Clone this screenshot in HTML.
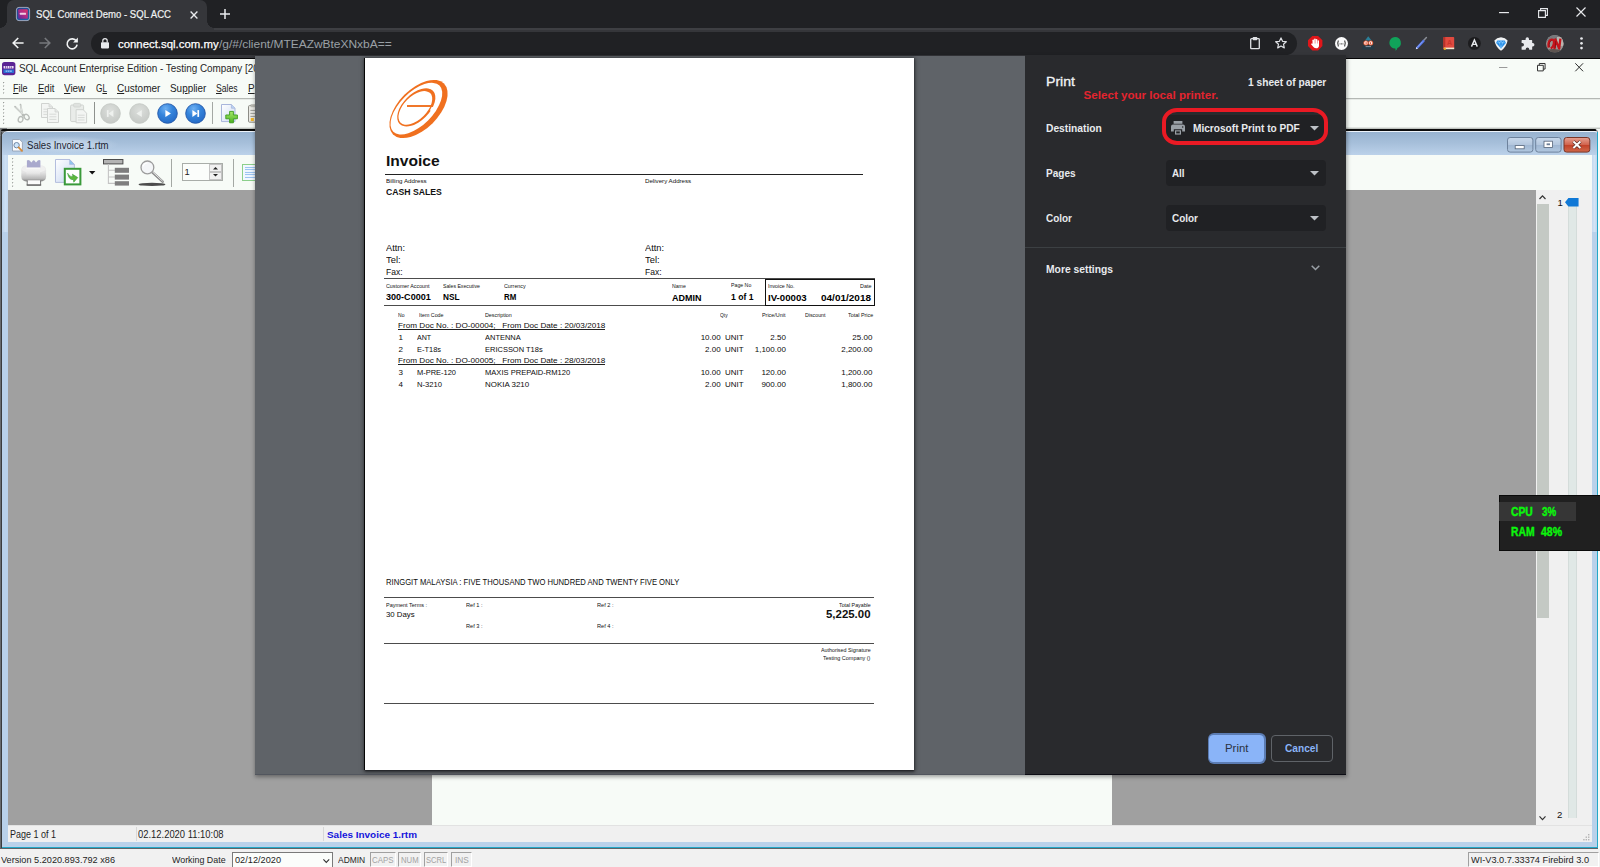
<!DOCTYPE html>
<html>
<head>
<meta charset="utf-8">
<title>SQL Connect Demo - SQL ACC</title>
<style>
*{box-sizing:border-box;margin:0;padding:0}
html,body{width:1600px;height:867px;overflow:hidden;background:#f7fbf7;font-family:"Liberation Sans",sans-serif;}
.abs{position:absolute}
.t{position:absolute;white-space:nowrap;line-height:1;transform-origin:0 0}
svg{overflow:visible}
/* ---------- Chrome ---------- */
#tabstrip{left:0;top:0;width:1600px;height:28px;background:#202124}
#tab{left:7px;top:0;width:200px;height:28px;background:#35363a;border-radius:7px 7px 0 0}
#tab:before,#tab:after{content:'';position:absolute;bottom:0;width:7px;height:7px;background:radial-gradient(circle at 0 0,transparent 6.6px,#35363a 7px)}
#tab:before{left:-7px}
#tab:after{right:-7px;background:radial-gradient(circle at 100% 0,transparent 6.6px,#35363a 7px)}
#toolbar{left:0;top:28px;width:1600px;height:30px;background:#35363a}
#tbline{left:0;top:57.8px;width:1600px;height:1.1px;background:#060607}
#omni{left:91px;top:32px;width:1206px;height:23px;border-radius:12px;background:#202124}
/* ---------- App ---------- */
#app{left:0;top:0;width:1600px;height:867px;background:#f7fbf7}
/* ---------- print dialog ---------- */
#dlg{left:255px;top:56px;width:1091px;height:719px;background:#5f6368;box-shadow:0 1px 4px 0.5px rgba(0,0,0,.36);border-bottom:1px solid #52565e}
#side{left:770px;top:-1px;width:321px;height:720px;background:#292a2d;border-bottom:1px solid #0d0d15}
#paper{left:110px;top:2px;width:549px;height:712.2px;background:#fff;box-shadow:-1px 0 0 #050505,0 1px 1.5px rgba(20,22,25,.7),0 1px 4px 1px rgba(0,0,0,.5)}
</style>
</head>
<body>
<!-- ================= APP (below chrome) ================= -->
<div id="app" class="abs">
<svg class="abs" style="left:1.8px;top:61.8px;" width="13.4" height="13.2" viewBox="0 0 13.4 13.2"><rect width="13.4" height="13.2" rx="2.6" fill="#5a2494"/>
<path d="M1.4 7.6 H12 V10.6 Q12 11 11.6 11 H1.8 Q1.4 11 1.4 10.6 Z" fill="#2a6fd2"/>
<rect x="1.6" y="3.9" width="10" height="2.7" rx="0.7" fill="#efe6f6"/>
<path d="M3.5 3.9 V6.6 M5.3 3.9 V6.6 M7.8 3.9 V6.6 M9.6 4.4 V6.6" stroke="#5a2494" stroke-width="0.7"/>
<path d="M3.6 8.4 H9.8 V10 H3.6 Z" fill="#9cc4f4" opacity="0.85"/><path d="M5.5 8.4 V10 M7.6 8.4 V10" stroke="#2a6fd2" stroke-width="0.6"/></svg>
<div class="t" style="left:19.20px;top:63px;line-height:11px;font-size:10px;color:#262626;transform:scaleX(0.9894);">SQL Account Enterprise Edition - Testing Company [20</div>
<svg class="abs" style="left:1499px;top:67.2px;" width="8.4" height="1" viewBox="0 0 8.4 1"><rect width="8.4" height="1" fill="#9a9a9a"/></svg>
<svg class="abs" style="left:1536.5px;top:63.4px;" width="8.6" height="8.4" viewBox="0 0 8.6 8.4"><path d="M0.5 2.3 H6.3 V7.9 H0.5 Z" stroke="#333" stroke-width="1" fill="none"/><path d="M2.3 2.3 V0.5 H8.1 V6.1 H6.3" stroke="#333" stroke-width="1" fill="none"/></svg>
<svg class="abs" style="left:1574.9px;top:63.2px;" width="8.4" height="8.6" viewBox="0 0 8.4 8.6"><path d="M0.3 0.3 L8.1 8.3 M8.1 0.3 L0.3 8.3" stroke="#2a2a2a" stroke-width="1" fill="none"/></svg>
<svg class="abs" style="left:3.2px;top:82.4px;" width="3" height="16.6" viewBox="0 0 3 16.6"><rect x="0" y="0.00" width="1.2" height="1.2" fill="#9a9e9a"/><rect x="1" y="1.00" width="1" height="1" fill="#fff"/><rect x="0" y="3.45" width="1.2" height="1.2" fill="#9a9e9a"/><rect x="1" y="4.45" width="1" height="1" fill="#fff"/><rect x="0" y="6.90" width="1.2" height="1.2" fill="#9a9e9a"/><rect x="1" y="7.90" width="1" height="1" fill="#fff"/><rect x="0" y="10.35" width="1.2" height="1.2" fill="#9a9e9a"/><rect x="1" y="11.35" width="1" height="1" fill="#fff"/></svg>
<div class="t" style="left:12.50px;top:83px;line-height:11px;font-size:10.4px;color:#222;transform:scaleX(0.8708);"><u>F</u>ile</div>
<div class="t" style="left:37.50px;top:83px;line-height:11px;font-size:10.4px;color:#222;transform:scaleX(0.9151);"><u>E</u>dit</div>
<div class="t" style="left:64.00px;top:83px;line-height:11px;font-size:10.4px;color:#222;transform:scaleX(0.9488);"><u>V</u>iew</div>
<div class="t" style="left:95.50px;top:83px;line-height:11px;font-size:10.4px;color:#222;transform:scaleX(0.7928);">G<u>L</u></div>
<div class="t" style="left:117.00px;top:83px;line-height:11px;font-size:10.4px;color:#222;transform:scaleX(0.9631);"><u>C</u>ustomer</div>
<div class="t" style="left:170.00px;top:83px;line-height:11px;font-size:10.4px;color:#222;transform:scaleX(0.9544);">Su<u>p</u>plier</div>
<div class="t" style="left:216.00px;top:83px;line-height:11px;font-size:10.4px;color:#222;transform:scaleX(0.8308);"><u>S</u>ales</div>
<div class="t" style="left:247.60px;top:83px;line-height:11px;font-size:10.4px;color:#222;transform:scaleX(0.9566);"><u>P</u>urchase</div>
<div class="abs" style="left:0px;top:98px;width:1600px;height:1px;background:#b4b8b4"></div>
<div class="abs" style="left:0px;top:99px;width:1600px;height:1px;background:#e6eae6"></div>
<svg class="abs" style="left:3.2px;top:101.6px;" width="3" height="25.9" viewBox="0 0 3 25.9"><rect x="0" y="0.00" width="1.2" height="1.2" fill="#9a9e9a"/><rect x="1" y="1.00" width="1" height="1" fill="#fff"/><rect x="0" y="3.45" width="1.2" height="1.2" fill="#9a9e9a"/><rect x="1" y="4.45" width="1" height="1" fill="#fff"/><rect x="0" y="6.90" width="1.2" height="1.2" fill="#9a9e9a"/><rect x="1" y="7.90" width="1" height="1" fill="#fff"/><rect x="0" y="10.35" width="1.2" height="1.2" fill="#9a9e9a"/><rect x="1" y="11.35" width="1" height="1" fill="#fff"/><rect x="0" y="13.80" width="1.2" height="1.2" fill="#9a9e9a"/><rect x="1" y="14.80" width="1" height="1" fill="#fff"/><rect x="0" y="17.25" width="1.2" height="1.2" fill="#9a9e9a"/><rect x="1" y="18.25" width="1" height="1" fill="#fff"/><rect x="0" y="20.70" width="1.2" height="1.2" fill="#9a9e9a"/><rect x="1" y="21.70" width="1" height="1" fill="#fff"/></svg>
<svg class="abs" style="left:13.5px;top:103.5px;" width="16" height="19" viewBox="0 0 16 19"><path d="M6.5 0.6 L8.6 11.4 M1 2.6 L10.2 11.6" stroke="#b9bdb9" stroke-width="1.7" fill="none" stroke-linecap="round"/>
<path d="M6.8 1.4 L8.2 9.6 M1.8 3.2 L8.6 10" stroke="#f1f4f1" stroke-width="0.7" fill="none"/>
<ellipse cx="6.6" cy="15.4" rx="2.3" ry="2.9" transform="rotate(18 6.6 15.4)" stroke="#b9bdb9" stroke-width="1.4" fill="none"/>
<ellipse cx="12.6" cy="13" rx="2.2" ry="3" transform="rotate(-38 12.6 13)" stroke="#b9bdb9" stroke-width="1.4" fill="none"/></svg>
<svg class="abs" style="left:41px;top:103px;" width="12" height="15" viewBox="0 0 12 15"><path d="M0.5 0.5 H8 L11.5 4 V14.5 H0.5 Z" fill="#f3f5f3" stroke="#d0d3d0" stroke-width="1"/><path d="M8 0.5 V4 H11.5" fill="#e4e7e4" stroke="#d0d3d0" stroke-width="0.8"/><path d="M2.4 6.2 H9.4 M2.4 8.8 H9.4 M2.4 11.4 H9.4" stroke="#d4d7d4" stroke-width="0.9"/></svg>
<svg class="abs" style="left:47px;top:108.4px;" width="12" height="15" viewBox="0 0 12 15"><path d="M0.5 0.5 H8 L11.5 4 V14.5 H0.5 Z" fill="#f3f5f3" stroke="#d0d3d0" stroke-width="1"/><path d="M8 0.5 V4 H11.5" fill="#e4e7e4" stroke="#d0d3d0" stroke-width="0.8"/><path d="M2.4 6.2 H9.4 M2.4 8.8 H9.4 M2.4 11.4 H9.4" stroke="#d4d7d4" stroke-width="0.9"/></svg>
<svg class="abs" style="left:70px;top:103px;" width="17.4" height="20.4" viewBox="0 0 17.4 20.4"><rect x="0.6" y="2" width="13" height="16.6" rx="1.2" fill="#e9ece9" stroke="#cfd3cf" stroke-width="1"/>
<rect x="3.6" y="0.4" width="7" height="3.6" rx="1" fill="#dfe2df" stroke="#cfd3cf" stroke-width="0.8"/>
<g transform="translate(5.6,6.2)"><path d="M0.5 0.5 H7.6 L11 4 V13.6 H0.5 Z" fill="#f3f5f3" stroke="#d0d3d0" stroke-width="1"/><path d="M2.2 6 H9 M2.2 8.4 H9 M2.2 10.8 H9" stroke="#d4d7d4" stroke-width="0.9"/></g></svg>
<div class="abs" style="left:94px;top:102px;width:1px;height:21.6px;background:#8e928e"></div>
<div class="abs" style="left:211.6px;top:102px;width:1px;height:21.6px;background:#a4a8a4"></div>
<svg class="abs" style="left:0px;top:0px;" width="1" height="1" viewBox="0 0 1 1"><defs><radialGradient id="gg" cx="0.5" cy="0.35" r="0.75"><stop offset="0" stop-color="#dcdfdc"/><stop offset="1" stop-color="#c2c6c2"/></radialGradient>
<radialGradient id="bg" cx="0.4" cy="0.25" r="0.8"><stop offset="0" stop-color="#6eb0f2"/><stop offset="0.45" stop-color="#3585dc"/><stop offset="1" stop-color="#2368c4"/></radialGradient></defs></svg>
<svg class="abs" style="left:100.4px;top:102.5px;" width="21" height="21" viewBox="0 0 21 21"><circle cx="10.5" cy="10.5" r="9.8" fill="url(#gg)" stroke="#c4c8c4" stroke-width="0.9"/><path d="M13.4 7.1 V13.9 L8.6 10.5 Z" fill="#eef1ee"/><rect x="6.9" y="7.1" width="1.7" height="6.8" fill="#eef1ee"/></svg>
<svg class="abs" style="left:128.5px;top:102.5px;" width="21" height="21" viewBox="0 0 21 21"><circle cx="10.5" cy="10.5" r="9.8" fill="url(#gg)" stroke="#c4c8c4" stroke-width="0.9"/><path d="M12.8 7.1 V13.9 L7.4 10.5 Z" fill="#eef1ee"/></svg>
<svg class="abs" style="left:156.8px;top:102.5px;" width="21" height="21" viewBox="0 0 21 21"><circle cx="10.5" cy="10.5" r="9.8" fill="url(#bg)" stroke="#2458a8" stroke-width="0.9"/><path d="M8.4 7.1 V13.9 L13.9 10.5 Z" fill="#ffffff"/></svg>
<svg class="abs" style="left:185.1px;top:102.5px;" width="21" height="21" viewBox="0 0 21 21"><circle cx="10.5" cy="10.5" r="9.8" fill="url(#bg)" stroke="#2458a8" stroke-width="0.9"/><path d="M7.4 7.1 V13.9 L12.3 10.5 Z" fill="#ffffff"/><rect x="12.4" y="7.1" width="1.7" height="6.8" fill="#ffffff"/></svg>
<svg class="abs" style="left:221px;top:104px;" width="17.4" height="19.6" viewBox="0 0 17.4 19.6"><defs><linearGradient id="nd" x1="0" y1="0" x2="1" y2="1"><stop offset="0" stop-color="#ffffff"/><stop offset="1" stop-color="#cfdcf4"/></linearGradient>
<linearGradient id="gp" x1="0" y1="0" x2="0" y2="1"><stop offset="0" stop-color="#a8ea6c"/><stop offset="1" stop-color="#4cb222"/></linearGradient></defs>
<path d="M0.5 0.5 H10.4 L14 4.2 V17.6 H0.5 Z" fill="url(#nd)" stroke="#a9b6dc" stroke-width="1"/><path d="M10.4 0.5 V4.2 H14" fill="#b9d3f3" stroke="#a9b6dc" stroke-width="0.8"/>
<path d="M8.6 7.4 H12.4 V11 H16.4 V14.8 H12.4 V18.8 H8.6 V14.8 H4.8 V11 H8.6 Z" fill="url(#gp)" stroke="#3c9a1e" stroke-width="0.9"/></svg>
<svg class="abs" style="left:248px;top:104px;" width="12" height="19" viewBox="0 0 12 19"><rect x="0.5" y="1.6" width="11" height="16.6" rx="1" fill="#e9e9e4" stroke="#8c8c86" stroke-width="1"/><rect x="2.6" y="0.2" width="7" height="3" fill="#b9b9b2"/><path d="M2.4 6.4 H9 M2.4 9.4 H9 M2.4 12.4 H9" stroke="#9a9a94" stroke-width="1"/><rect x="2.8" y="14" width="3" height="3" fill="#f0b428"/></svg>
<div class="abs" style="left:0px;top:126.6px;width:1600px;height:2.4px;background:linear-gradient(#f0f4f0,#b0b4b0)"></div>
<div class="abs" style="left:0px;top:128.4px;width:7px;height:7px;background:#7c7f80"></div>
<div class="abs" style="left:0px;top:129px;width:1598px;height:719.4px;background:linear-gradient(90deg,#8a8e92 0,#3a3c3e 1.2px,#3a3c3e 2px,#6f7378 2px);border-radius:7px 4px 0 0"></div>
<div class="abs" style="left:1px;top:129.2px;width:1595px;height:1.4px;background:#0c0c0c;border-radius:6px 3px 0 0"></div>
<div class="abs" style="left:1.7px;top:130.5px;width:1595.9px;height:717.4px;background:#b9d1ea;border-radius:6px 3px 0 0;border-top:1px solid #eef4fb"></div>
<div class="abs" style="left:1.7px;top:131.5px;width:1595.1px;height:24px;background:linear-gradient(#98b3d0 0%,#a6bfda 45%,#bdd3eb 100%);border-radius:5px 3px 0 0"></div>
<div class="abs" style="left:2px;top:846.8px;width:1595.6px;height:1.2px;background:#22a8c8"></div>
<div class="abs" style="left:1596.6px;top:132px;width:1px;height:716px;background:#22a8c8"></div>
<div class="abs" style="left:2.2px;top:155px;width:6.2px;height:77px;background:linear-gradient(90deg,#bcd3eb,#cde0f4 60%,#c3d8ef)"></div>
<div class="abs" style="left:1591.8px;top:155px;width:4.8px;height:77px;background:linear-gradient(90deg,#c3d8ef,#d2e3f5 50%,#c0d6ee)"></div>
<div class="abs" style="left:14px;top:136px;width:104px;height:17px;background:radial-gradient(ellipse at center,rgba(220,232,246,.75) 0%,rgba(220,232,246,0) 72%)"></div>
<svg class="abs" style="left:12px;top:138.6px;" width="12" height="13" viewBox="0 0 12 13"><path d="M0.5 0.5 H7.6 L10.4 3.2 V12 H0.5 Z" fill="#fbfcfe" stroke="#93a0b4" stroke-width="0.9"/>
<circle cx="4.6" cy="6.2" r="2.7" fill="#cfe6fb" stroke="#6f86a4" stroke-width="1"/><path d="M6.6 8.4 L10 11.8" stroke="#d48a3a" stroke-width="1.8" stroke-linecap="round"/></svg>
<div class="t" style="left:26.60px;top:140px;line-height:11px;font-size:10px;color:#1c2430;transform:scaleX(0.9595);">Sales Invoice 1.rtm</div>
<svg class="abs" style="left:1506.6px;top:137px;" width="84" height="16" viewBox="0 0 84 16"><defs><linearGradient id="cb1" x1="0" y1="0" x2="0" y2="1"><stop offset="0" stop-color="#c9d9ec"/><stop offset="0.48" stop-color="#b4c7de"/><stop offset="0.5" stop-color="#9fb6d2"/><stop offset="1" stop-color="#b2c8e0"/></linearGradient>
<linearGradient id="cb2" x1="0" y1="0" x2="0" y2="1"><stop offset="0" stop-color="#e7a293"/><stop offset="0.48" stop-color="#d2654f"/><stop offset="0.5" stop-color="#c23f27"/><stop offset="1" stop-color="#d0694a"/></linearGradient></defs><rect x="0.5" y="0.5" width="25.4" height="14.6" rx="2.6" fill="url(#cb1)" stroke="#6d829c" stroke-width="1"/>
<rect x="28.7" y="0.5" width="25.4" height="14.6" rx="2.6" fill="url(#cb1)" stroke="#6d829c" stroke-width="1"/>
<rect x="57" y="0.5" width="25.8" height="14.6" rx="2.6" fill="url(#cb2)" stroke="#7a3628" stroke-width="1"/>
<rect x="8.2" y="8.6" width="9" height="3.2" fill="#fff" stroke="#56657a" stroke-width="0.8"/>
<rect x="37" y="4.2" width="8.6" height="6.2" fill="#fff" stroke="#56657a" stroke-width="0.8"/><rect x="39.6" y="6.4" width="3.4" height="1.8" fill="#6d7f97"/>
<path d="M66.4 4.6 L73.4 11 M73.4 4.6 L66.4 11" stroke="#5a2a22" stroke-width="3.4"/><path d="M66.4 4.6 L73.4 11 M73.4 4.6 L66.4 11" stroke="#fff" stroke-width="2"/></svg>
<div class="abs" style="left:8.4px;top:155px;width:1583.4px;height:35px;background:#f7fbf7"></div>
<svg class="abs" style="left:11.8px;top:158.4px;" width="3" height="30.6" viewBox="0 0 3 30.6"><rect x="0" y="0.00" width="1.2" height="1.2" fill="#9a9e9a"/><rect x="1" y="1.00" width="1" height="1" fill="#fff"/><rect x="0" y="3.45" width="1.2" height="1.2" fill="#9a9e9a"/><rect x="1" y="4.45" width="1" height="1" fill="#fff"/><rect x="0" y="6.90" width="1.2" height="1.2" fill="#9a9e9a"/><rect x="1" y="7.90" width="1" height="1" fill="#fff"/><rect x="0" y="10.35" width="1.2" height="1.2" fill="#9a9e9a"/><rect x="1" y="11.35" width="1" height="1" fill="#fff"/><rect x="0" y="13.80" width="1.2" height="1.2" fill="#9a9e9a"/><rect x="1" y="14.80" width="1" height="1" fill="#fff"/><rect x="0" y="17.25" width="1.2" height="1.2" fill="#9a9e9a"/><rect x="1" y="18.25" width="1" height="1" fill="#fff"/><rect x="0" y="20.70" width="1.2" height="1.2" fill="#9a9e9a"/><rect x="1" y="21.70" width="1" height="1" fill="#fff"/><rect x="0" y="24.15" width="1.2" height="1.2" fill="#9a9e9a"/><rect x="1" y="25.15" width="1" height="1" fill="#fff"/><rect x="0" y="27.60" width="1.2" height="1.2" fill="#9a9e9a"/><rect x="1" y="28.60" width="1" height="1" fill="#fff"/></svg>
<svg class="abs" style="left:21px;top:160px;" width="26" height="26" viewBox="0 0 26 26"><defs><linearGradient id="pr" x1="0" y1="0" x2="0" y2="1"><stop offset="0" stop-color="#ededed"/><stop offset="0.45" stop-color="#e2e2e2"/><stop offset="0.8" stop-color="#bdbdbd"/><stop offset="1" stop-color="#7c7c7c"/></linearGradient>
<linearGradient id="pr2" x1="0" y1="0" x2="0" y2="1"><stop offset="0" stop-color="#f7f7f7"/><stop offset="0.5" stop-color="#e6e6e6"/><stop offset="1" stop-color="#b9b9b9"/></linearGradient></defs>
<path d="M0.3 10.2 Q0.3 5.3 6.4 5.3 H19 Q25.1 5.3 25.1 10.2 V16.6 Q25.1 21.6 18.6 21.6 H6.8 Q0.3 21.6 0.3 16.6 Z" fill="url(#pr)"/>
<path d="M0.8 10 Q1 6 6.4 5.8 H19 Q24.4 6 24.6 10 Q21 12.6 12.7 12.6 Q4.4 12.6 0.8 10 Z" fill="#efefef"/>
<path d="M5.9 0.4 Q7.4 -0.4 8.6 0.6 L10.4 2.6 L12 0.4 Q12.7 -0.1 13.4 0.4 L15 2.6 L16.8 0.6 Q18 -0.4 19.4 0.4 V7.6 H5.9 Z" fill="#a9a9cd"/>
<rect x="5.4" y="8" width="13.6" height="10.4" fill="url(#pr2)"/>
<path d="M5.4 8.2 H19" stroke="#fafafa" stroke-width="0.8"/>
<path d="M6.6 20.3 H19.2 V24.6 H6.6 Z" fill="#fbfbfb"/>
<path d="M6.2 20.6 V25 H19.6 V20.6" stroke="#6a6a6a" stroke-width="0.9" fill="none"/><path d="M5.6 25.1 H20.2" stroke="#5a5a5a" stroke-width="1.1"/></svg>
<svg class="abs" style="left:55px;top:159px;" width="26.4" height="26.4" viewBox="0 0 26.4 26.4"><defs><linearGradient id="ex" x1="0" y1="0" x2="1" y2="1"><stop offset="0" stop-color="#ffffff"/><stop offset="1" stop-color="#c4d4f0"/></linearGradient></defs>
<path d="M0.5 0.5 H14.6 L19.4 5.4 V23.4 H0.5 Z" fill="url(#ex)" stroke="#b4bede" stroke-width="1"/><path d="M14.6 0.5 V5.4 H19.4 Z" fill="#8fc4ee" stroke="#a9b6dc" stroke-width="0.6"/>
<rect x="9.8" y="9.8" width="15.6" height="15.6" fill="#fff" stroke="#3a9a3a" stroke-width="2"/>
<path d="M12.6 14.2 Q14.4 18.2 18 17.6 L17.4 15.2 L22.8 18.6 L18.8 23.2 L18.4 20.6 Q13.8 21.2 12.6 14.2 Z" fill="#5cb83c" stroke="#3a9a3a" stroke-width="0.6"/></svg>
<svg class="abs" style="left:89px;top:171.2px;" width="6.4" height="3.4" viewBox="0 0 6.4 3.4"><path d="M0 0 H6.4 L3.2 3.4 Z" fill="#111"/></svg>
<svg class="abs" style="left:103px;top:158.8px;" width="26.4" height="26.8" viewBox="0 0 26.4 26.8"><rect x="0.5" y="0.5" width="19.4" height="4.4" fill="#b4b4b4" stroke="#4c4c4c" stroke-width="1"/>
<path d="M5.4 5 V24.4 H12 M5.4 11.2 H12 M5.4 18 H12" stroke="#c4c4c4" stroke-width="1.1" fill="none"/>
<rect x="11.8" y="8.8" width="14.2" height="5" fill="#7e7e7e"/><rect x="11.8" y="15.6" width="14.2" height="5" fill="#7e7e7e"/><rect x="11.8" y="22.2" width="14.2" height="4.4" fill="#7e7e7e"/></svg>
<svg class="abs" style="left:137.6px;top:159.6px;" width="28" height="27" viewBox="0 0 28 27"><ellipse cx="14" cy="24.4" rx="13.4" ry="1.7" fill="#4c4c4c"/>
<path d="M13.6 11.6 L24.6 21.6" stroke="#8a8a8a" stroke-width="2.6" stroke-linecap="round"/><path d="M13.8 11.2 L24.4 21" stroke="#e4e4e4" stroke-width="1" stroke-linecap="round"/>
<circle cx="9.4" cy="7.4" r="6.4" fill="#f4f6f8" stroke="#9c9c9c" stroke-width="1.3"/><path d="M5.2 6.4 A4.4 4.4 0 0 1 9.4 3" stroke="#fff" stroke-width="1.2" fill="none"/></svg>
<div class="abs" style="left:171px;top:159px;width:1px;height:27.6px;background:#a4a8a4"></div>
<div class="abs" style="left:233.4px;top:159px;width:1px;height:27.6px;background:#a4a8a4"></div>
<div class="abs" style="left:181.6px;top:163px;width:41.8px;height:17.6px;background:#fbfdfb;border:1px solid #a9ada9"></div>
<div class="t" style="left:184.60px;top:166px;line-height:11px;font-size:9.4px;color:#222;">1</div>
<div class="abs" style="left:208.6px;top:164.2px;width:13.6px;height:7.6px;background:#f0f0f0;border:1px solid #c4c4c4"></div>
<div class="abs" style="left:208.6px;top:172px;width:13.6px;height:7.6px;background:#f0f0f0;border:1px solid #c4c4c4"></div>
<svg class="abs" style="left:213px;top:166.6px;" width="5" height="2.6" viewBox="0 0 5 2.6"><path d="M0 2.6 L2.5 0 L5 2.6 Z" fill="#222"/></svg>
<svg class="abs" style="left:213px;top:174.4px;" width="5" height="2.6" viewBox="0 0 5 2.6"><path d="M0 0 L2.5 2.6 L5 0 Z" fill="#222"/></svg>
<div class="abs" style="left:241.6px;top:163.6px;width:20px;height:17.8px;background:#f2f8ff;border:1.4px solid #8ccf8c"><div class="abs" style="left:2px;top:2.4px;width:16px;height:11px;background:repeating-linear-gradient(#9cc4f2 0 1px,#eef6ff 1px 2.4px)"></div></div>
<div class="abs" style="left:8.4px;top:190px;width:1527.2px;height:635px;background:#a0a0a0"></div>
<div class="abs" style="left:431.6px;top:190px;width:680.6px;height:635px;background:#f7fbf7"></div>
<div class="abs" style="left:1535.6px;top:190px;width:56.2px;height:635px;background:#f0f0f0"></div>
<div class="abs" style="left:1536.6px;top:204px;width:12px;height:414px;background:#c4c9c4"></div>
<svg class="abs" style="left:1539.2px;top:195.4px;" width="7" height="4.4" viewBox="0 0 7 4.4"><path d="M0.5 4 L3.5 0.8 L6.5 4" stroke="#333" stroke-width="1.2" fill="none"/></svg>
<svg class="abs" style="left:1539px;top:815.6px;" width="7" height="4.4" viewBox="0 0 7 4.4"><path d="M0.5 0.4 L3.5 3.6 L6.5 0.4" stroke="#333" stroke-width="1.2" fill="none"/></svg>
<div class="abs" style="left:1568px;top:204px;width:9px;height:614px;background:#e0e8e6;border-left:1px solid #d4dcda;border-right:1px solid #d4dcda"></div>
<svg class="abs" style="left:1565.4px;top:197.6px;" width="13.6" height="8.4" viewBox="0 0 13.6 8.4"><path d="M0 4.2 L3.4 0 H13.6 V8.4 H3.4 Z" fill="#0f78d6"/></svg>
<div class="t" style="left:1557.40px;top:197px;line-height:11px;font-size:9.6px;color:#111;">1</div>
<div class="t" style="left:1557.00px;top:809px;line-height:11px;font-size:9.6px;color:#111;">2</div>
<div class="abs" style="left:8.4px;top:825px;width:1583.4px;height:17.4px;background:#f0f0f0;border-top:1px solid #e2e2e2"></div>
<div class="abs" style="left:136px;top:827px;width:1px;height:14px;background:#d8d8d8"></div>
<div class="abs" style="left:323px;top:827px;width:1px;height:14px;background:#d8d8d8"></div>
<div class="t" style="left:9.60px;top:829px;line-height:11px;font-size:10.4px;color:#1e1e1e;transform:scaleX(0.8654);">Page 1 of 1</div>
<div class="t" style="left:138.00px;top:829px;line-height:11px;font-size:10.4px;color:#1e1e1e;transform:scaleX(0.9051);">02.12.2020 11:10:08</div>
<div class="t" style="left:327.00px;top:829px;line-height:11px;font-size:9.4px;color:#1414dc;font-weight:bold;transform:scaleX(1.0594);">Sales Invoice 1.rtm</div>
<svg class="abs" style="left:1582.6px;top:833.6px;" width="6.6" height="6.6" viewBox="0 0 6.6 6.6"><g fill="#b4b4b4"><rect x="5" y="0" width="1.4" height="1.4"/><rect x="2.6" y="2.5" width="1.4" height="1.4"/><rect x="5" y="2.5" width="1.4" height="1.4"/><rect x="0.2" y="5" width="1.4" height="1.4"/><rect x="2.6" y="5" width="1.4" height="1.4"/><rect x="5" y="5" width="1.4" height="1.4"/></g></svg>
<div class="abs" style="left:0px;top:848px;width:1598px;height:1px;background:#5e6266"></div>
<div class="abs" style="left:0px;top:849px;width:1600px;height:18px;background:#f1f1f1"></div>
<div class="t" style="left:1.20px;top:854px;line-height:11px;font-size:9.8px;color:#1e1e1e;transform:scaleX(0.9342);">Version 5.2020.893.792 x86</div>
<div class="t" style="left:171.60px;top:854px;line-height:11px;font-size:9.8px;color:#1e1e1e;transform:scaleX(0.9058);">Working Date</div>
<div class="abs" style="left:232.2px;top:852.4px;width:100.4px;height:16px;background:#fbfdfb;border:1px solid #7a7a7a"></div>
<div class="t" style="left:235.00px;top:854px;line-height:11px;font-size:9.8px;color:#1e1e1e;transform:scaleX(0.9379);">02/12/2020</div>
<svg class="abs" style="left:322.6px;top:859px;" width="6.6" height="4" viewBox="0 0 6.6 4"><path d="M0.4 0.4 L3.3 3.4 L6.2 0.4" stroke="#333" stroke-width="1.1" fill="none"/></svg>
<div class="t" style="left:338.00px;top:854px;line-height:11px;font-size:9.8px;color:#1e1e1e;transform:scaleX(0.8614);">ADMIN</div>
<div class="abs" style="left:370px;top:852px;width:25.6px;height:15px;border:1px solid #fff;border-top-color:#a0a0a0;border-left-color:#a0a0a0"></div>
<div class="t" style="left:372.40px;top:855px;line-height:10px;font-size:9.2px;color:#a2a2a2;transform:scaleX(0.8629);">CAPS</div>
<div class="abs" style="left:398.4px;top:852px;width:22.6px;height:15px;border:1px solid #fff;border-top-color:#a0a0a0;border-left-color:#a0a0a0"></div>
<div class="t" style="left:401.30px;top:855px;line-height:10px;font-size:9.2px;color:#a2a2a2;transform:scaleX(0.8406);">NUM</div>
<div class="abs" style="left:423.6px;top:852px;width:24.4px;height:15px;border:1px solid #fff;border-top-color:#a0a0a0;border-left-color:#a0a0a0"></div>
<div class="t" style="left:426.10px;top:855px;line-height:10px;font-size:9.2px;color:#a2a2a2;transform:scaleX(0.824);">SCRL</div>
<div class="abs" style="left:451px;top:852px;width:21.4px;height:15px;border:1px solid #fff;border-top-color:#a0a0a0;border-left-color:#a0a0a0"></div>
<div class="t" style="left:455.20px;top:855px;line-height:10px;font-size:9.2px;color:#a2a2a2;transform:scaleX(0.9003);">INS</div>
<div class="abs" style="left:1467.6px;top:852px;width:131px;height:15px;border:1px solid #fff;border-top-color:#a0a0a0;border-left-color:#a0a0a0"></div>
<div class="t" style="left:1470.60px;top:854px;line-height:11px;font-size:9.8px;color:#1e1e1e;transform:scaleX(0.938);">WI-V3.0.7.33374 Firebird 3.0</div>
</div>

<!-- ================= CHROME ================= -->
<div id="tabstrip" class="abs"></div>
<div id="tab" class="abs"></div>
<div id="toolbar" class="abs"></div>
<div class="abs" style="left:214px;top:28px;width:1386px;height:1.5px;background:#3e3f43"></div>
<div id="tbline" class="abs"></div>
<div id="omni" class="abs"></div>
<svg class="abs" style="left:16.2px;top:7px;" width="14" height="14" viewBox="0 0 14 14"><defs><linearGradient id="fv" x1="1" y1="0" x2="0" y2="1"><stop offset="0" stop-color="#e03468"/><stop offset="0.5" stop-color="#b02a86"/><stop offset="1" stop-color="#5a2aa0"/></linearGradient>
<linearGradient id="fb" x1="0" y1="0" x2="1" y2="1"><stop offset="0" stop-color="#27408c"/><stop offset="1" stop-color="#1a6aa8"/></linearGradient></defs>
<rect x="0.4" y="0.4" width="13.2" height="13.2" rx="2.6" fill="url(#fb)" stroke="#b9bfd2" stroke-width="0.8"/>
<rect x="2.2" y="2.2" width="9.6" height="9.6" rx="1.2" fill="url(#fv)"/>
<rect x="3.8" y="5.8" width="6.2" height="1.9" rx="0.5" fill="#f6dcec" opacity="0.92"/></svg>
<div class="t" style="left:36.00px;top:8px;line-height:12px;font-size:11px;color:#f1f3f4;transform:scaleX(0.8704);-webkit-text-stroke:0.2px #f1f3f4;">SQL Connect Demo - SQL ACC</div>
<svg class="abs" style="left:189.5px;top:10.5px;" width="8" height="8" viewBox="0 0 8 8"><path d="M0.6 0.6 L7.4 7.4 M7.4 0.6 L0.6 7.4" stroke="#e8eaed" stroke-width="1.35" fill="none"/></svg>
<svg class="abs" style="left:219.6px;top:9.4px;" width="10" height="10" viewBox="0 0 10 10"><path d="M5 0 V10 M0 5 H10" stroke="#e8eaed" stroke-width="1.5" fill="none"/></svg>
<svg class="abs" style="left:1499px;top:11.5px;" width="10" height="1.2" viewBox="0 0 10 1.2"><rect width="10" height="1.2" fill="#e8eaed"/></svg>
<svg class="abs" style="left:1537.5px;top:7.5px;" width="10" height="10" viewBox="0 0 10 10"><path d="M0.6 2.6 H7.4 V9.4 H0.6 Z" stroke="#e8eaed" stroke-width="1.1" fill="none"/><path d="M2.6 2.6 V0.6 H9.4 V7.4 H7.4" stroke="#e8eaed" stroke-width="1.1" fill="none"/></svg>
<svg class="abs" style="left:1575.5px;top:7.2px;" width="10" height="10" viewBox="0 0 10 10"><path d="M0.5 0.5 L9.5 9.5 M9.5 0.5 L0.5 9.5" stroke="#e8eaed" stroke-width="1.15" fill="none"/></svg>
<svg class="abs" style="left:12.2px;top:37.4px;" width="12" height="12" viewBox="0 0 12 12"><path d="M11.6 6 H1.6 M6.2 1 L1.2 6 L6.2 11" stroke="#f1f3f4" stroke-width="1.6" fill="none" stroke-linejoin="miter"/></svg>
<svg class="abs" style="left:38.8px;top:37.4px;" width="12" height="12" viewBox="0 0 12 12"><path d="M0.4 6 H10.4 M5.8 1 L10.8 6 L5.8 11" stroke="#76787c" stroke-width="1.6" fill="none"/></svg>
<svg class="abs" style="left:65.6px;top:37.2px;" width="12.4" height="12.4" viewBox="0 0 12.4 12.4"><path d="M10.4 4.2 A5 5 0 1 0 11.1 7.6" stroke="#f1f3f4" stroke-width="1.6" fill="none"/><path d="M11.9 0.6 V5.4 H7.1 Z" fill="#f1f3f4"/></svg>
<svg class="abs" style="left:101px;top:38px;" width="8" height="10.5" viewBox="0 0 8 10.5"><rect x="0" y="4.2" width="8" height="6.2" rx="0.8" fill="#e8eaed"/><path d="M1.8 4.6 V2.8 A2.2 2.2 0 0 1 6.2 2.8 V4.6" stroke="#e8eaed" stroke-width="1.2" fill="none"/></svg>
<div class="t" style="left:118.40px;top:37px;line-height:13px;font-size:11.7px;color:#ffffff;transform:scaleX(0.974);-webkit-text-stroke:0.25px #fff;">connect.sql.com.my</div>
<div class="t" style="left:219.40px;top:37px;line-height:13px;font-size:11.7px;color:#9aa0a6;transform:scaleX(1.022);">/g/#/client/MTEAZwBteXNxbA==</div>
<svg class="abs" style="left:1249.8px;top:37px;" width="10" height="12.4" viewBox="0 0 10 12.4"><rect x="0.7" y="1.7" width="8.6" height="10" rx="0.8" stroke="#dfe1e5" stroke-width="1.3" fill="none"/><rect x="2.8" y="0" width="4.4" height="3.2" rx="0.6" fill="#dfe1e5"/></svg>
<svg class="abs" style="left:1275px;top:37px;" width="12" height="11.6" viewBox="0 0 12 11.6"><path d="M6 0.9 L7.55 4.3 L11.3 4.7 L8.5 7.2 L9.3 10.9 L6 9 L2.7 10.9 L3.5 7.2 L0.7 4.7 L4.45 4.3 Z" stroke="#dfe1e5" stroke-width="1.2" fill="none" stroke-linejoin="round"/></svg>
<svg class="abs" style="left:1308px;top:36.3px;" width="14.4" height="14.4" viewBox="0 0 14.4 14.4"><path d="M4.3 0 H10.1 L14.4 4.3 V10.1 L10.1 14.4 H4.3 L0 10.1 V4.3 Z" fill="#e0161a"/><g fill="#fff"><rect x="4.5" y="3.6" width="1.5" height="5.4" rx="0.75"/><rect x="6.2" y="2.5" width="1.5" height="6" rx="0.75"/><rect x="7.9" y="2.9" width="1.5" height="6" rx="0.75"/><rect x="9.6" y="4.2" width="1.4" height="5" rx="0.7"/><path d="M4.5 7.4 H11 V9.4 Q11 12.2 8 12.2 Q6 12.2 5 10.6 L2.9 8.1 Q3.6 7 4.5 8 Z"/></g></svg>
<svg class="abs" style="left:1335.2px;top:37px;" width="13" height="13" viewBox="0 0 13 13"><circle cx="6.5" cy="6.5" r="6.5" fill="#fbfbfc"/><path d="M3.4 3.6 Q1.9 6.5 3.4 9.4 M9.6 3.6 Q11.1 6.5 9.6 9.4" stroke="#3a3a3a" stroke-width="1.1" fill="none"/><path d="M4.6 6.9 h0.9 M6.05 6.9 h0.9 M7.5 6.9 h0.9" stroke="#3a3a3a" stroke-width="1"/></svg>
<svg class="abs" style="left:1361px;top:36px;" width="14.5" height="14" viewBox="0 0 14.5 14"><path d="M4 4.4 L7.2 0.2 L10.6 4.4 Z" fill="#2b7f98"/><path d="M2.6 13 L4.4 4.2 H10.2 L12 13 Z" fill="#35586a"/><path d="M0.8 13.4 L2.6 8 H12 L13.8 13.4 Z" fill="#243a46"/><circle cx="4.9" cy="6.9" r="2.5" fill="#e4572e"/><circle cx="9.7" cy="6.9" r="2.5" fill="#e4572e"/><circle cx="4.9" cy="6.9" r="1.7" fill="#fff"/><circle cx="9.7" cy="6.9" r="1.7" fill="#fff"/><circle cx="5.1" cy="7.1" r="0.8" fill="#e03010"/><circle cx="9.5" cy="7.1" r="0.8" fill="#e03010"/><path d="M4.6 10.6 h5.4" stroke="#9ab" stroke-width="0.8"/></svg>
<svg class="abs" style="left:1388.6px;top:36.6px;" width="12" height="14" viewBox="0 0 12 14"><path d="M6 0 A5.8 5.8 0 0 1 8.4 11.1 Q8 13 6.4 13.8 Q6.8 12.4 6.3 11.6 A5.8 5.8 0 0 1 6 0 Z" fill="#10a35a"/></svg>
<svg class="abs" style="left:1415.2px;top:37px;" width="12" height="13" viewBox="0 0 12 13"><path d="M11.4 0.6 L8.6 3.6" stroke="#8a8f96" stroke-width="1.5" stroke-linecap="round"/><path d="M8.2 2.6 L9.8 4.2 L3 11.6 L0.8 12.2 L1.4 10 Z" fill="#5577ea"/><path d="M3 11.6 L0.8 12.2 L1.4 10 Z" fill="#dfe6ff"/><path d="M7.6 4.6 L2.6 10" stroke="#9fb4ff" stroke-width="0.7"/></svg>
<svg class="abs" style="left:1442.5px;top:37.2px;" width="11.4" height="13" viewBox="0 0 11.4 13"><rect x="0.4" y="0" width="10.8" height="12" rx="0.8" fill="#e04a3f"/><rect x="0.4" y="0" width="1.9" height="12" fill="#b93229"/><rect x="0.8" y="10.6" width="10.4" height="1.6" fill="#f5e9d0"/><text x="6.6" y="8.4" font-size="7" font-weight="bold" text-anchor="middle" fill="#c8362c" font-family="Liberation Sans">A</text><rect x="0.8" y="10.8" width="2" height="2" fill="#f2b01e"/></svg>
<svg class="abs" style="left:1468.2px;top:37.4px;" width="12.8" height="12.8" viewBox="0 0 12.8 12.8"><circle cx="6.4" cy="6.4" r="6.4" fill="#1c1c1e"/><path d="M3.5 9.6 L6.4 3 L9.3 9.6 M4.6 7.4 H8.2" stroke="#e8eaed" stroke-width="1.4" fill="none"/></svg>
<svg class="abs" style="left:1494.4px;top:37px;" width="14" height="14" viewBox="0 0 14 14"><path d="M7 0.3 Q11.4 0.6 13.6 3.4 Q12.6 9.6 7 13.8 Q1.4 9.6 0.4 3.4 Q2.6 0.6 7 0.3 Z" fill="#f1f3f4"/><path d="M3.4 3.6 H10.6 L12 5.8 L7 11.6 L2 5.8 Z" fill="#1e88e5"/><path d="M3.4 3.6 L5.4 5.8 L7 3.6 L8.6 5.8 L10.6 3.6" stroke="#8fd0ff" stroke-width="0.7" fill="none"/><path d="M2 5.8 H12 M5.4 5.8 L7 11.6 L8.6 5.8" stroke="#8fd0ff" stroke-width="0.6" fill="none"/></svg>
<svg class="abs" style="left:1521.2px;top:37px;" width="12.6" height="13" viewBox="0 0 12.6 13"><path d="M4.6 1.9 A1.7 1.7 0 0 1 8 1.9 V2.9 H10.6 Q11.2 2.9 11.2 3.5 V6 H11.7 A1.75 1.75 0 0 1 11.7 9.5 H11.2 V12.2 Q11.2 12.8 10.6 12.8 H8.2 V12.2 A1.75 1.75 0 0 0 4.7 12.2 V12.8 H1.2 Q0.6 12.8 0.6 12.2 V9.6 H1.2 A1.8 1.8 0 0 0 1.2 6 H0.6 V3.5 Q0.6 2.9 1.2 2.9 H4.6 Z" fill="#e8eaed"/></svg>
<svg class="abs" style="left:1546.2px;top:35.2px;" width="17.6" height="17.6" viewBox="0 0 17.6 17.6"><defs><clipPath id="av"><circle cx="8.8" cy="8.8" r="8.8"/></clipPath></defs><g clip-path="url(#av)"><rect width="17.6" height="17.6" fill="#9a9693"/><rect x="0" y="0" width="17.6" height="6" fill="#77797c"/><rect x="11" y="2" width="7" height="9" fill="#b9b4ae"/><path d="M2.6 12.6 Q1.6 5.6 5.4 4.6 Q8.6 4.2 7.8 8.8 Q7.4 12 4.8 13.4 M8.4 14.6 L9.4 4.4 L13.2 13.6 L14.4 3.6" stroke="#c4141b" stroke-width="2.3" fill="none" stroke-linejoin="round"/><path d="M3.4 12 Q2.8 6.4 5.6 5.6 M9.2 13 L9.8 6" stroke="#7a0a10" stroke-width="0.7" fill="none"/><path d="M1 15 Q8 12.6 17 15.6 V17.6 H0 Z" fill="#5e5450"/></g></svg>
<svg class="abs" style="left:1580.4px;top:37.4px;" width="3" height="12.6" viewBox="0 0 3 12.6"><circle cx="1.5" cy="1.5" r="1.35" fill="#e8eaed"/><circle cx="1.5" cy="6.3" r="1.35" fill="#e8eaed"/><circle cx="1.5" cy="11.1" r="1.35" fill="#e8eaed"/></svg>

<!-- ================= PRINT DIALOG ================= -->
<div id="dlg" class="abs">
  <div id="paper" class="abs">
<svg class="abs" style="left:0;top:0" width="549" height="200" viewBox="365 58 549 200"><g transform="translate(418.5,109) rotate(-45)">
<ellipse cx="0" cy="0" rx="36" ry="20" fill="#f0701f"/>
<ellipse cx="-1.3" cy="-1.7" rx="32.7" ry="16.5" fill="#fff"/>
</g>
<g transform="translate(416.3,107.4) rotate(-45)">
<ellipse cx="0" cy="0" rx="23.5" ry="13.3" fill="#f0701f"/>
<ellipse cx="-1.0" cy="-0.3" rx="20.9" ry="11.5" fill="#fff"/>
</g>
<path d="M431.6 107 L436.2 106.9 L435.1 111.8 L429.8 110.4 Z" fill="#fff"/>
<path d="M407 106 L432 106" stroke="#f0701f" stroke-width="1.9" fill="none"/></svg>
<div class="t" style="left:21.00px;top:94px;line-height:17px;font-size:15px;color:#111;font-weight:bold;transform:scaleX(1.037);">Invoice</div>
<div class="abs" style="left:20px;top:116px;width:477.5px;height:1.3px;background:#222"></div>
<div class="t" style="left:21.00px;top:120px;line-height:6px;font-size:5.6px;color:#111;transform:scaleX(1.1062);">Billing Address</div>
<div class="t" style="left:279.50px;top:120px;line-height:6px;font-size:5.6px;color:#111;transform:scaleX(1.1004);">Delivery Address</div>
<div class="t" style="left:21.00px;top:129px;line-height:10px;font-size:8.6px;color:#111;font-weight:bold;transform:scaleX(1.0092);">CASH SALES</div>
<div class="t" style="left:21.00px;top:185px;line-height:10px;font-size:8.4px;color:#0c0c0c;transform:scaleX(1.1024);">Attn:</div>
<div class="t" style="left:279.50px;top:185px;line-height:10px;font-size:8.4px;color:#0c0c0c;transform:scaleX(1.1024);">Attn:</div>
<div class="t" style="left:21.00px;top:197px;line-height:10px;font-size:8.4px;color:#0c0c0c;transform:scaleX(1.1204);">Tel:</div>
<div class="t" style="left:279.50px;top:197px;line-height:10px;font-size:8.4px;color:#0c0c0c;transform:scaleX(1.1204);">Tel:</div>
<div class="t" style="left:21.00px;top:209px;line-height:10px;font-size:8.4px;color:#0c0c0c;transform:scaleX(1.0186);">Fax:</div>
<div class="t" style="left:279.50px;top:209px;line-height:10px;font-size:8.4px;color:#0c0c0c;transform:scaleX(1.0186);">Fax:</div>
<div class="abs" style="left:18.7px;top:220.3px;width:491px;height:1.2px;background:#4c4c4c"></div>
<div class="abs" style="left:18.7px;top:246.8px;width:382px;height:1.2px;background:#4c4c4c"></div>
<div class="abs" style="left:400.2px;top:221.3px;width:109.6px;height:26.4px;border:1.3px solid #111"></div>
<div class="t" style="left:21.00px;top:225px;line-height:6px;font-size:5.6px;color:#111;transform:scaleX(0.9518);">Customer Account</div>
<div class="t" style="left:77.70px;top:225px;line-height:6px;font-size:5.6px;color:#111;transform:scaleX(0.9268);">Sales Executive</div>
<div class="t" style="left:138.70px;top:225px;line-height:6px;font-size:5.6px;color:#111;transform:scaleX(0.9558);">Currency</div>
<div class="t" style="left:307.00px;top:225px;line-height:6px;font-size:5.6px;color:#111;transform:scaleX(0.9248);">Name</div>
<div class="t" style="left:365.70px;top:224px;line-height:6px;font-size:5.6px;color:#111;transform:scaleX(0.932);">Page No</div>
<div class="t" style="left:402.60px;top:225px;line-height:6px;font-size:5.6px;color:#111;transform:scaleX(0.947);">Invoice No.</div>
<div class="t" style="left:494.90px;top:225px;line-height:6px;font-size:5.6px;color:#111;transform:scaleX(0.9638);">Date</div>
<div class="t" style="left:21.00px;top:235px;line-height:9px;font-size:8.2px;color:#000;font-weight:bold;transform:scaleX(1.1057);">300-C0001</div>
<div class="t" style="left:77.70px;top:235px;line-height:9px;font-size:8.2px;color:#000;font-weight:bold;transform:scaleX(1.0076);">NSL</div>
<div class="t" style="left:138.70px;top:235px;line-height:9px;font-size:8.2px;color:#000;font-weight:bold;transform:scaleX(0.9659);">RM</div>
<div class="t" style="left:307.00px;top:236px;line-height:9px;font-size:8.2px;color:#000;font-weight:bold;transform:scaleX(1.0952);">ADMIN</div>
<div class="t" style="left:366.40px;top:235px;line-height:9px;font-size:8.2px;color:#000;font-weight:bold;transform:scaleX(1.0472);">1 of 1</div>
<div class="t" style="left:402.60px;top:236px;line-height:9px;font-size:8.2px;color:#000;font-weight:bold;transform:scaleX(1.1806);">IV-00003</div>
<div class="t" style="left:456.20px;top:236px;line-height:9px;font-size:8.2px;color:#000;font-weight:bold;transform:scaleX(1.22);">04/01/2018</div>
<div class="t" style="left:32.50px;top:254px;line-height:6px;font-size:5.6px;color:#111;transform:scaleX(0.9083);">No</div>
<div class="t" style="left:53.50px;top:254px;line-height:6px;font-size:5.6px;color:#111;transform:scaleX(0.9492);">Item Code</div>
<div class="t" style="left:120.00px;top:254px;line-height:6px;font-size:5.6px;color:#111;transform:scaleX(0.9577);">Description</div>
<div class="t" style="left:355.00px;top:254px;line-height:6px;font-size:5.6px;color:#111;transform:scaleX(0.8732);">Qty</div>
<div class="t" style="left:397.40px;top:254px;line-height:6px;font-size:5.6px;color:#111;transform:scaleX(0.9649);">Price/Unit</div>
<div class="t" style="left:439.50px;top:254px;line-height:6px;font-size:5.6px;color:#111;transform:scaleX(0.9419);">Discount</div>
<div class="t" style="left:483.40px;top:254px;line-height:6px;font-size:5.6px;color:#111;transform:scaleX(0.9646);">Total Price</div>
<div class="t" style="left:32.50px;top:263px;line-height:9px;font-size:8px;color:#0c0c0c;transform:scaleX(1.0202);white-space:pre;">From Doc No. : DO-00004;   From Doc Date : 20/03/2018</div>
<div class="abs" style="left:32.5px;top:271.4px;width:207.5px;height:0.8px;background:#222"></div>
<div class="t" style="left:32.50px;top:298px;line-height:9px;font-size:8px;color:#0c0c0c;transform:scaleX(1.0202);white-space:pre;">From Doc No. : DO-00005;   From Doc Date : 28/03/2018</div>
<div class="abs" style="left:32.5px;top:306.4px;width:207.5px;height:0.8px;background:#222"></div>
<div class="t" style="left:33.60px;top:275px;line-height:9px;font-size:8px;color:#0c0c0c;">1</div>
<div class="t" style="left:51.60px;top:275px;line-height:9px;font-size:8px;color:#0c0c0c;transform:scaleX(0.8875);">ANT</div>
<div class="t" style="left:120.00px;top:275px;line-height:9px;font-size:8px;color:#0c0c0c;transform:scaleX(0.9337);">ANTENNA</div>
<div class="t" style="left:335.67px;top:275px;line-height:9px;font-size:8px;color:#0c0c0c;">10.00</div>
<div class="t" style="left:359.80px;top:275px;line-height:9px;font-size:8px;color:#0c0c0c;transform:scaleX(0.9908);">UNIT</div>
<div class="t" style="left:405.32px;top:275px;line-height:9px;font-size:8px;color:#0c0c0c;">2.50</div>
<div class="t" style="left:487.37px;top:275px;line-height:9px;font-size:8px;color:#0c0c0c;">25.00</div>
<div class="t" style="left:33.60px;top:287px;line-height:9px;font-size:8px;color:#0c0c0c;">2</div>
<div class="t" style="left:51.60px;top:287px;line-height:9px;font-size:8px;color:#0c0c0c;transform:scaleX(0.9303);">E-T18s</div>
<div class="t" style="left:120.00px;top:287px;line-height:9px;font-size:8px;color:#0c0c0c;transform:scaleX(0.9358);">ERICSSON T18s</div>
<div class="t" style="left:340.12px;top:287px;line-height:9px;font-size:8px;color:#0c0c0c;">2.00</div>
<div class="t" style="left:359.80px;top:287px;line-height:9px;font-size:8px;color:#0c0c0c;transform:scaleX(0.9908);">UNIT</div>
<div class="t" style="left:389.76px;top:287px;line-height:9px;font-size:8px;color:#0c0c0c;">1,100.00</div>
<div class="t" style="left:476.26px;top:287px;line-height:9px;font-size:8px;color:#0c0c0c;">2,200.00</div>
<div class="t" style="left:33.60px;top:310px;line-height:9px;font-size:8px;color:#0c0c0c;">3</div>
<div class="t" style="left:51.60px;top:310px;line-height:9px;font-size:8px;color:#0c0c0c;transform:scaleX(0.9331);">M-PRE-120</div>
<div class="t" style="left:120.00px;top:310px;line-height:9px;font-size:8px;color:#0c0c0c;transform:scaleX(0.9455);">MAXIS PREPAID-RM120</div>
<div class="t" style="left:335.67px;top:310px;line-height:9px;font-size:8px;color:#0c0c0c;">10.00</div>
<div class="t" style="left:359.80px;top:310px;line-height:9px;font-size:8px;color:#0c0c0c;transform:scaleX(0.9908);">UNIT</div>
<div class="t" style="left:396.43px;top:310px;line-height:9px;font-size:8px;color:#0c0c0c;">120.00</div>
<div class="t" style="left:476.26px;top:310px;line-height:9px;font-size:8px;color:#0c0c0c;">1,200.00</div>
<div class="t" style="left:33.60px;top:322px;line-height:9px;font-size:8px;color:#0c0c0c;">4</div>
<div class="t" style="left:51.60px;top:322px;line-height:9px;font-size:8px;color:#0c0c0c;transform:scaleX(0.9524);">N-3210</div>
<div class="t" style="left:120.00px;top:322px;line-height:9px;font-size:8px;color:#0c0c0c;transform:scaleX(0.9936);">NOKIA 3210</div>
<div class="t" style="left:340.12px;top:322px;line-height:9px;font-size:8px;color:#0c0c0c;">2.00</div>
<div class="t" style="left:359.80px;top:322px;line-height:9px;font-size:8px;color:#0c0c0c;transform:scaleX(0.9908);">UNIT</div>
<div class="t" style="left:396.43px;top:322px;line-height:9px;font-size:8px;color:#0c0c0c;">900.00</div>
<div class="t" style="left:476.26px;top:322px;line-height:9px;font-size:8px;color:#0c0c0c;">1,800.00</div>
<div class="t" style="left:20.80px;top:519px;line-height:10px;font-size:8.9px;color:#0c0c0c;transform:scaleX(0.8627);">RINGGIT MALAYSIA : FIVE THOUSAND TWO HUNDRED AND TWENTY FIVE ONLY</div>
<div class="abs" style="left:18.7px;top:538.7px;width:490.4px;height:1.2px;background:#4c4c4c"></div>
<div class="t" style="left:21.00px;top:544px;line-height:6px;font-size:5.6px;color:#111;transform:scaleX(0.9791);">Payment Terms :</div>
<div class="t" style="left:101.00px;top:544px;line-height:6px;font-size:5.6px;color:#111;transform:scaleX(1.007);">Ref 1 :</div>
<div class="t" style="left:232.00px;top:544px;line-height:6px;font-size:5.6px;color:#111;transform:scaleX(1.007);">Ref 2 :</div>
<div class="t" style="left:474.00px;top:544px;line-height:6px;font-size:5.6px;color:#111;transform:scaleX(0.9436);">Total Payable</div>
<div class="t" style="left:21.00px;top:552px;line-height:9px;font-size:7.9px;color:#0c0c0c;transform:scaleX(0.9878);">30 Days</div>
<div class="t" style="left:461.20px;top:551px;line-height:11px;font-size:10.2px;color:#111;font-weight:bold;transform:scaleX(1.1221);">5,225.00</div>
<div class="t" style="left:101.00px;top:565px;line-height:6px;font-size:5.6px;color:#111;transform:scaleX(1.007);">Ref 3 :</div>
<div class="t" style="left:232.00px;top:565px;line-height:6px;font-size:5.6px;color:#111;transform:scaleX(1.007);">Ref 4 :</div>
<div class="abs" style="left:18.7px;top:584.6px;width:490.4px;height:1.2px;background:#4c4c4c"></div>
<div class="t" style="left:456.00px;top:589px;line-height:6px;font-size:5.6px;color:#111;transform:scaleX(0.9512);">Authorised Signature</div>
<div class="t" style="left:458.30px;top:597px;line-height:6px;font-size:5.6px;color:#111;transform:scaleX(0.9773);">Testing Company ()</div>
<div class="abs" style="left:18.7px;top:644.9px;width:490.4px;height:1.2px;background:#4c4c4c"></div>
  </div>
  <div id="side" class="abs">
<div class="t" style="left:20.70px;top:19px;line-height:15px;font-size:13.6px;color:#f1f3f4;transform:scaleX(1.0375);-webkit-text-stroke:0.3px #f1f3f4;">Print</div>
<div class="t" style="left:222.50px;top:21px;line-height:12px;font-size:10.8px;color:#e8eaed;font-weight:bold;transform:scaleX(0.9455);font-weight:bold;">1 sheet of paper</div>
<div class="t" style="left:58.60px;top:34px;line-height:12px;font-size:11.6px;color:#e3242f;font-weight:bold;">Select your local printer.</div>
<div class="t" style="left:20.70px;top:67px;line-height:12px;font-size:10.8px;color:#e8eaed;font-weight:bold;transform:scaleX(0.949);">Destination</div>
<div class="abs" style="left:141px;top:60.2px;width:159.8px;height:26px;background:#202124;border-radius:4px"></div>
<div class="t" style="left:167.50px;top:67px;line-height:12px;font-size:10.8px;color:#e8eaed;font-weight:bold;transform:scaleX(0.9371);">Microsoft Print to PDF</div>
<svg class="abs" style="left:285px;top:71px;" width="9" height="4.6" viewBox="0 0 9 4.6"><path d="M0 0 L9 0 L4.5 4.6 Z" fill="#bdc1c6"/></svg>
<svg class="abs" style="left:145.7px;top:66.3px;" width="14" height="13.8" viewBox="0 0 14 13.8"><path d="M2.6 0 H11.4 V2.8 H2.6 Z" fill="#9aa0a6"/>
<path d="M2 3.6 H12 Q14 3.6 14 5.6 V10.6 H11.2 V8.2 H2.8 V10.6 H0 V5.6 Q0 3.6 2 3.6 Z" fill="#9aa0a6"/>
<path d="M4 9.3 H10 V13.6 H4 Z" fill="#9aa0a6"/><path d="M5.2 10.4 H8.8 V12.4 H5.2 Z" fill="#202124"/>
<circle cx="11.7" cy="5.9" r="0.75" fill="#202124"/></svg>
<div class="t" style="left:20.70px;top:112px;line-height:12px;font-size:10.8px;color:#e8eaed;font-weight:bold;transform:scaleX(0.9305);">Pages</div>
<div class="abs" style="left:141px;top:105.4px;width:159.8px;height:26px;background:#202124;border-radius:4px"></div>
<div class="t" style="left:147.20px;top:112px;line-height:12px;font-size:10.8px;color:#e8eaed;font-weight:bold;transform:scaleX(0.9133);">All</div>
<svg class="abs" style="left:285px;top:116.2px;" width="9" height="4.6" viewBox="0 0 9 4.6"><path d="M0 0 L9 0 L4.5 4.6 Z" fill="#bdc1c6"/></svg>
<div class="t" style="left:20.70px;top:157px;line-height:12px;font-size:10.8px;color:#e8eaed;font-weight:bold;transform:scaleX(0.9219);">Color</div>
<div class="abs" style="left:141px;top:150.4px;width:159.8px;height:26px;background:#202124;border-radius:4px"></div>
<div class="t" style="left:147.20px;top:157px;line-height:12px;font-size:10.8px;color:#e8eaed;font-weight:bold;transform:scaleX(0.9219);">Color</div>
<svg class="abs" style="left:285px;top:161.2px;" width="9" height="4.6" viewBox="0 0 9 4.6"><path d="M0 0 L9 0 L4.5 4.6 Z" fill="#bdc1c6"/></svg>
<div class="abs" style="left:0px;top:192.4px;width:321px;height:1px;background:#3c4043"></div>
<div class="t" style="left:20.70px;top:208px;line-height:12px;font-size:10.8px;color:#e8eaed;font-weight:bold;transform:scaleX(0.9544);">More settings</div>
<svg class="abs" style="left:286px;top:210.3px;" width="9" height="5.6" viewBox="0 0 9 5.6"><path d="M0.7 0.7 L4.5 4.5 L8.3 0.7" stroke="#9aa0a6" stroke-width="1.5" fill="none"/></svg>
<div class="abs" style="left:137px;top:53px;width:166.4px;height:37.2px;border:4.4px solid #ea1a24;border-radius:15px/14px"></div>
<div class="abs" style="left:182.6px;top:678px;width:58.4px;height:31px;background:#5b7cb3;border-radius:6px"></div>
<div class="abs" style="left:184.4px;top:679.8px;width:54.8px;height:27.4px;background:#8ab4f8;border-radius:4.5px"></div>
<div class="t" style="left:200.00px;top:687px;line-height:12px;font-size:10.8px;color:#2b3240;transform:scaleX(1.0539);">Print</div>
<div class="abs" style="left:246px;top:680px;width:61.6px;height:27px;border:1px solid #5f6368;border-radius:4px"></div>
<div class="t" style="left:260.40px;top:687px;line-height:12px;font-size:10.8px;color:#8ab4f8;font-weight:bold;transform:scaleX(0.9377);">Cancel</div>
  </div>
</div>

<div class="abs" style="left:1498.9px;top:494.8px;width:101.1px;height:56px;background:#202020;border-left:1.1px solid #0a0a0a;border-top:1.1px solid #0a0a0a;border-bottom:1.1px solid #0a0a0a"></div>
<div class="abs" style="left:1499.4px;top:502.1px;width:76.6px;height:19px;background:#363636"></div>
<div class="t" style="left:1510.80px;top:505px;line-height:14px;font-size:12.4px;color:#0cf60c;font-weight:bold;transform:scaleX(0.833);-webkit-text-stroke:0.4px #0cf60c;">CPU</div>
<div class="t" style="left:1542.10px;top:505px;line-height:14px;font-size:12.4px;color:#0cf60c;font-weight:bold;transform:scaleX(0.7867);-webkit-text-stroke:0.4px #0cf60c;">3%</div>
<div class="t" style="left:1510.80px;top:525px;line-height:14px;font-size:12.4px;color:#0cf60c;font-weight:bold;transform:scaleX(0.8328);-webkit-text-stroke:0.4px #0cf60c;">RAM</div>
<div class="t" style="left:1541.00px;top:525px;line-height:14px;font-size:12.4px;color:#0cf60c;font-weight:bold;transform:scaleX(0.8504);-webkit-text-stroke:0.4px #0cf60c;">48%</div>
</body>
</html>
